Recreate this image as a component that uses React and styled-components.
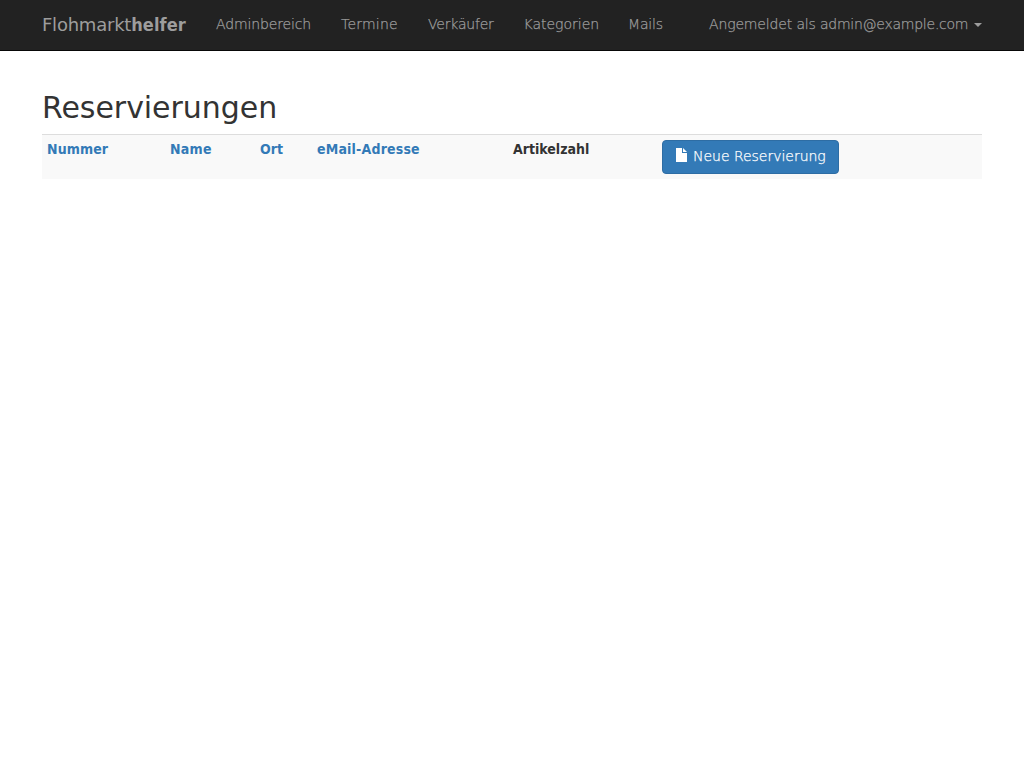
import React from 'react';
import styled, { createGlobalStyle } from 'styled-components';

const GlobalStyle = createGlobalStyle`
  *, *::before, *::after { box-sizing: border-box; }
  body {
    margin: 0;
    background: #fff;
    color: #333;
    font: 14px/20px "DejaVu Sans", sans-serif;
  }
  a { color: #337ab7; text-decoration: none; }
`;

const Navbar = styled.nav`
  height: 51px;
  background: #222;
  border-bottom: 1px solid #080808;
`;

const Container = styled.div`
  width: 940px;
  margin: 0 auto;
`;

const NavRow = styled(Container)`
  display: flex;
  align-items: flex-start;
`;

const Brand = styled.a`
  && { color: #9d9d9d; }
  width: 159px;
  flex: none;
  padding: 15px 15px 15px 0;
  font-size: 18px;
  letter-spacing: -0.23px;
  white-space: nowrap;

  b {
    font-family: "DejaVu Sans Condensed", "DejaVu Sans", sans-serif;
    font-stretch: condensed;
    letter-spacing: 0.12px;
  }
`;

const NavLink = styled.a`
  && { color: #9d9d9d; }
  flex: none;
  width: ${({ $width }) => ($width ? `${$width}px` : 'auto')};
  padding: 14px 15px 16px;
  font-weight: 200;
  letter-spacing: ${({ $tracking = 0 }) => $tracking}px;
  -webkit-text-stroke: 0.25px currentColor;
  white-space: nowrap;
`;

const UserLink = styled(NavLink)`
  display: flex;
  align-items: center;
  margin-left: auto;
  padding-right: 0;
`;

const UserPrefix = styled.span`
  width: 111px;
  letter-spacing: -0.15px;
`;

const UserMail = styled.span`
  width: 154px;
  letter-spacing: -0.25px;
`;

const Caret = styled.span`
  border-top: 4px solid #9d9d9d;
  border-left: 4px solid transparent;
  border-right: 4px solid transparent;
  transform: translateY(1px);
`;

const Title = styled.h2`
  margin: 40px 0 10px;
  font-size: 30px;
  font-weight: 400;
  line-height: 33px;
  letter-spacing: -0.05px;
`;

const Table = styled.table`
  width: 100%;
  table-layout: fixed;
  border-collapse: separate;
  border-spacing: 0;
`;

const HeaderCell = styled.th`
  width: ${({ $width }) => ($width ? `${$width}px` : 'auto')};
  height: 45px;
  padding: ${({ $action }) => ($action ? '5px' : '4px 5px 5px')};
  border-top: 1px solid #ddd;
  background: #f9f9f9;
  font-family: "DejaVu Sans Condensed", "DejaVu Sans", sans-serif;
  font-stretch: condensed;
  font-weight: 700;
  letter-spacing: ${({ $tracking = 0 }) => $tracking}px;
  text-align: left;
  vertical-align: top;
`;

const Button = styled.button`
  display: inline-flex;
  align-items: center;
  gap: 4px;
  width: 177px;
  height: 34px;
  padding: 0 12px 2px;
  border: 1px solid #2e6da4;
  border-radius: 4px;
  background: #337ab7;
  color: #fff;
  font: 200 14px/20px "DejaVu Sans", sans-serif;
  letter-spacing: -0.02px;
  -webkit-text-stroke: 0.25px currentColor;
  white-space: nowrap;
  vertical-align: top;

  svg {
    flex: none;
    margin-bottom: 2px;
  }
`;

const FileIcon = () => (
  <svg width="14" height="14" viewBox="0 0 14 14" fill="#fff" aria-hidden="true">
    <path d="M1 0h6v5h5v9H1z" />
    <path d="M8 0l4 4H8z" />
  </svg>
);

const links = [
  { label: 'Adminbereich', width: 125, tracking: -0.14 },
  { label: 'Termine', width: 87, tracking: 0.22 },
  { label: 'Verkäufer', width: 95.5, tracking: -0.2 },
  { label: 'Kategorien', width: 104.5, tracking: 0 },
  { label: 'Mails', width: 65, tracking: -0.15 },
];

const columns = [
  { label: 'Nummer', width: 123, tracking: 0.1, sortable: true },
  { label: 'Name', width: 90, tracking: 0.25, sortable: true },
  { label: 'Ort', width: 57, sortable: true },
  { label: 'eMail-Adresse', width: 196, tracking: 0.18, sortable: true },
  { label: 'Artikelzahl', width: 149 },
];

export default function App() {
  return (
    <>
      <GlobalStyle />
      <Navbar>
        <NavRow>
          <Brand href="#">Flohmarkt<b>helfer</b></Brand>
          {links.map(({ label, width, tracking }) => (
            <NavLink key={label} href="#" $width={width} $tracking={tracking}>{label}</NavLink>
          ))}
          <UserLink href="#">
            <UserPrefix>Angemeldet als </UserPrefix>
            <UserMail>admin@example.com</UserMail>
            <Caret />
          </UserLink>
        </NavRow>
      </Navbar>
      <Container as="main">
        <Title>Reservierungen</Title>
        <Table>
          <thead>
            <tr>
              {columns.map(({ label, width, tracking, sortable }) => (
                <HeaderCell key={label} $width={width} $tracking={tracking}>
                  {sortable ? <a href="#">{label}</a> : label}
                </HeaderCell>
              ))}
              <HeaderCell $action>
                <Button><FileIcon />Neue Reservierung</Button>
              </HeaderCell>
            </tr>
          </thead>
        </Table>
      </Container>
    </>
  );
}
